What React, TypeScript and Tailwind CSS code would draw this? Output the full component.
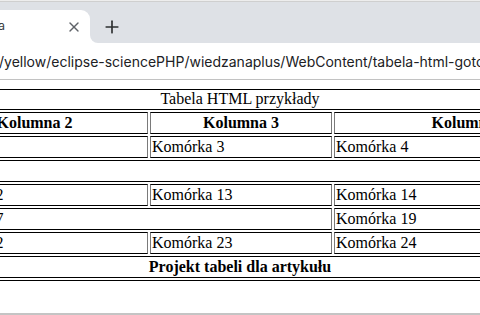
import { X, Plus } from "lucide-react";

const cell =
  "px-px py-px leading-[18px] whitespace-nowrap border border-solid border-y-black border-x-[#7a7a7a] text-left font-normal";
const head =
  "px-px py-px leading-[18px] whitespace-nowrap border border-solid border-y-black border-x-[#7a7a7a] text-center font-bold";

const rows: { text: string; span?: number }[][] = [
  [{ text: "Komórka 1", span: 2 }, { text: "Komórka 3" }, { text: "Komórka 4" }, { text: "Komórka 5" }],
  [{ text: "Komórka 6", span: 5 }],
  [{ text: "Komórka 11" }, { text: "Komórka 12" }, { text: "Komórka 13" }, { text: "Komórka 14" }, { text: "Komórka 15" }],
  [{ text: "Komórka 16" }, { text: "Komórka 17", span: 2 }, { text: "Komórka 19" }, { text: "Komórka 20" }],
  [{ text: "Komórka 21" }, { text: "Komórka 22" }, { text: "Komórka 23" }, { text: "Komórka 24" }, { text: "Komórka 25" }],
];

const BrowserBar = () => {
  return (
    <div className="font-['Inter','Liberation_Sans',sans-serif]">
      <div className="h-px bg-[#ededed]" />
      <div className="h-px bg-[#cfcfcf]" />
      {/* tab strip */}
      <div className="h-[41px] bg-[#dee1e6] flex items-end overflow-hidden">
        <div className="ml-[-120px] w-[210px] h-[33px] shrink-0 bg-white rounded-tr-[9px] flex items-center pl-2 pr-2">
          <div className="w-[117px] shrink-0 flex justify-end overflow-hidden">
            <span className="shrink-0 whitespace-nowrap text-[12.5px] text-[#3c4043]">
              Tabela HTML - gotowa
            </span>
          </div>
          <div className="flex-1" />
          <div className="w-4 h-4 flex items-center justify-center text-[#5f6368]">
            <X size={16} strokeWidth={2} />
          </div>
        </div>
        {/* bottom flare of the active tab */}
        <div className="w-2 h-2 shrink-0 bg-white">
          <div className="w-2 h-2 bg-[#dee1e6] rounded-bl-[8px]" />
        </div>
        <div className="ml-1 h-[33px] flex items-center text-[#2d2f31]">
          <Plus size={20} strokeWidth={2} />
        </div>
      </div>
      {/* toolbar */}
      <div className="h-[36px] bg-white flex items-center overflow-hidden">
        <span className="ml-[-1px] whitespace-nowrap text-[14px] text-[#202124]">
          /yellow/eclipse-sciencePHP/wiedzanaplus/WebContent/tabela-html-gotowa.html
        </span>
      </div>
      <div className="h-px bg-[#c2c2c2]" />
    </div>
  );
};

const App = () => {
  return (
    <div className="w-[480px] h-[315px] bg-white flex flex-col overflow-hidden">
      <BrowserBar />
      <div className="flex-1 overflow-hidden">
        <table className="mt-[7px] ml-[-240px] w-[960px] table-fixed border-separate border-spacing-[2px] border-x border-b border-black text-[16px] leading-[18px] text-black font-['Liberation_Serif',serif]">
          <colgroup>
            <col className="w-[156px]" />
            <col className="w-[227px]" />
            <col className="w-[182px]" />
            <col className="w-[271px]" />
            <col className="w-[110px]" />
          </colgroup>
          <thead>
            <tr>
              <th colSpan={5} className="px-px pt-0 pb-px leading-[18px] border border-black text-center font-normal">
                Tabela HTML przykłady
              </th>
            </tr>
            <tr>
              <th className={head}>Kolumna 1</th>
              <th className={head}>Kolumna 2</th>
              <th className={head}>Kolumna 3</th>
              <th className={head}>Kolumna 4</th>
              <th className={head}>Kolumna 5</th>
            </tr>
          </thead>
          <tbody>
            {rows.map((row, i) => (
              <tr key={i}>
                {row.map((c) => (
                  <td key={c.text} colSpan={c.span} className={cell}>
                    {c.text}
                  </td>
                ))}
              </tr>
            ))}
          </tbody>
          <tfoot>
            <tr>
              <th colSpan={5} className={head}>
                Projekt tabeli dla artykułu
              </th>
            </tr>
          </tfoot>
        </table>
      </div>
      <div className="h-[2px] bg-[#c4c4c4]" />
    </div>
  );
};

export default App;
